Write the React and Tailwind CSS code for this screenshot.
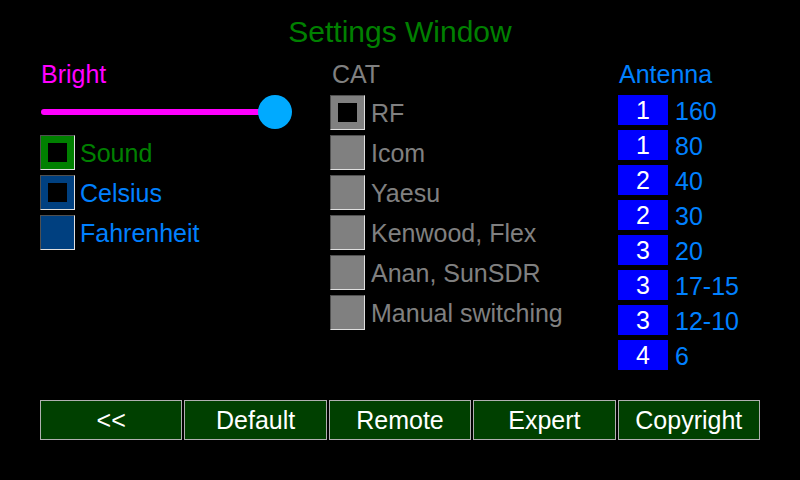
import React from "react";

const font = { fontFamily: '"Liberation Sans", Arial, sans-serif' };

function Check({ bg, checked }) {
  return (
    <div
      className={`w-[35px] h-[35px] shrink-0 flex items-center justify-center border-l border-t border-l-[#505050] border-t-[#505050] border-r border-b border-r-[#e0e0e0] border-b-[#e0e0e0] ${bg}`}
    >
      {checked && <div className="w-[19px] h-[19px] bg-black" />}
    </div>
  );
}

export default function App() {
  const cat = ["RF", "Icom", "Yaesu", "Kenwood, Flex", "Anan, SunSDR", "Manual switching"];
  const ant = [
    ["1", "160"],
    ["1", "80"],
    ["2", "40"],
    ["2", "30"],
    ["3", "20"],
    ["3", "17-15"],
    ["3", "12-10"],
    ["4", "6"],
  ];
  const buttons = ["<<", "Default", "Remote", "Expert", "Copyright"];
  return (
    <div className="w-[800px] h-[480px] bg-black overflow-hidden text-[25px] leading-none" style={font}>
      <div className="pt-[17px] h-[57px] text-center text-[30px] leading-[30px] text-[#008000]">
        Settings Window
      </div>
      <div className="flex pl-[40px] h-[343px]">
        {/* Left column */}
        <div className="w-[290px] flex flex-col">
          <div className="h-[35px] flex items-center text-[#ff00ff] pl-[1px]">Bright</div>
          <div className="mt-[3px] relative h-[35px] w-[252px]">
            <div className="absolute left-[1px] top-[14px] h-[6px] w-[230px] rounded-full bg-[#ff00ff]" />
            <div className="absolute left-[218px] top-0 w-[34px] h-[34px] rounded-full bg-[#00aaff]" />
          </div>
          <div className="mt-[5px] flex flex-col gap-[5px]">
            <div className="flex items-center gap-[5px] text-[#008000]">
              <Check bg="bg-[#008000]" checked />
              <span className="pt-[1px]">Sound</span>
            </div>
            <div className="flex items-center gap-[5px] text-[#0080ff]">
              <Check bg="bg-[#004080]" checked />
              <span className="pt-[1px]">Celsius</span>
            </div>
            <div className="flex items-center gap-[5px] text-[#0080ff]">
              <Check bg="bg-[#004080]" />
              <span className="pt-[1px]">Fahrenheit</span>
            </div>
          </div>
        </div>
        {/* CAT column */}
        <div className="w-[288px] flex flex-col">
          <div className="h-[35px] flex items-center text-[#808080] pl-[2px]">CAT</div>
          <div className="mt-[3px] flex flex-col gap-[5px]">
            {cat.map((c, i) => (
              <div key={c} className="flex items-center gap-[6px] text-[#808080]">
                <Check bg="bg-[#808080]" checked={i === 0} />
                <span className="pt-[1px]">{c}</span>
              </div>
            ))}
          </div>
        </div>
        {/* Antenna column */}
        <div className="flex flex-col">
          <div className="h-[35px] flex items-center text-[#0080ff] pl-[1px]">Antenna</div>
          <div className="mt-[3px] flex flex-col gap-[5px]">
            {ant.map(([n, b], i) => (
              <div key={i} className="flex items-center gap-[7px] text-[#0080ff]">
                <div className="w-[50px] h-[30px] bg-[#0000ff] text-white flex items-center justify-center">
                  {n}
                </div>
                <span className="pt-[2px]">{b}</span>
              </div>
            ))}
          </div>
        </div>
      </div>
      <div className="px-[40px] grid grid-cols-5 gap-[2px]">
        {buttons.map((b) => (
          <div
            key={b}
            className="h-[40px] bg-[#004000] border border-[#b0b0b0] text-white flex items-center justify-center"
          >
            {b}
          </div>
        ))}
      </div>
    </div>
  );
}
